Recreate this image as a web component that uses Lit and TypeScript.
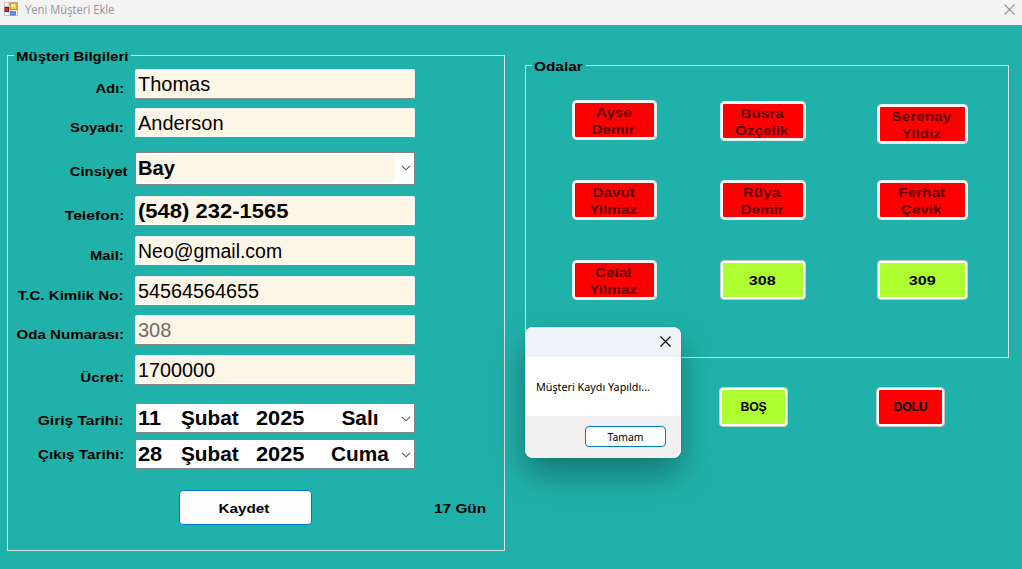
import { LitElement, html, css, svg } from "lit";
import { customElement, property } from "lit/decorators.js";
import { classMap } from "lit/directives/class-map.js";
import { styleMap } from "lit/directives/style-map.js";

type Kind = "text" | "combo" | "date";
interface Field {
  label: string;
  kind: Kind;
  gap: number;
  drop: number;
  labelStretch?: number;
  value?: string;
  bold?: boolean;
  disabled?: boolean;
  stretch?: number;
  date?: [string, string, string, string];
}

const FIELDS: Field[] = [
  { label: "Adı:", kind: "text", gap: 0, drop: 24, value: "Thomas" },
  { label: "Soyadı:", kind: "text", gap: 9, drop: 24, value: "Anderson" },
  { label: "Cinsiyet", kind: "combo", gap: 14, drop: 24, value: "Bay", bold: true, stretch: 1.01 },
  { label: "Telefon:", kind: "text", gap: 11, drop: 24, labelStretch: 1.16, value: "(548) 232-1565", bold: true, stretch: 1.1 },
  { label: "Mail:", kind: "text", gap: 10, drop: 24, value: "Neo@gmail.com", stretch: 0.973 },
  { label: "T.C. Kimlik No:", kind: "text", gap: 10, drop: 24, labelStretch: 1.12, value: "54564564655", stretch: 0.99 },
  { label: "Oda Numarası:", kind: "text", gap: 9, drop: 24, labelStretch: 1.12, value: "308", disabled: true },
  { label: "Ücret:", kind: "text", gap: 10, drop: 27, labelStretch: 1.12, value: "1700000", stretch: 0.99 },
  { label: "Giriş Tarihi:", kind: "date", gap: 17, drop: 22, labelStretch: 1.15, date: ["11", "Şubat", "2025", "Salı"] },
  { label: "Çıkış Tarihi:", kind: "date", gap: 6, drop: 20, labelStretch: 1.13, date: ["28", "Şubat", "2025", "Cuma"] },
];

interface Room {
  lines: string[];
  taken: boolean;
  drop: number;
}
const ROOMS: Room[] = [
  { lines: ["Ayse", "Demir"], taken: true, drop: 0 },
  { lines: ["Büsra", "Özçelik"], taken: true, drop: 1 },
  { lines: ["Serenay", "Yildiz"], taken: true, drop: 4 },
  { lines: ["Davut", "Yilmaz"], taken: true, drop: 0 },
  { lines: ["Rüya", "Demir"], taken: true, drop: 0 },
  { lines: ["Ferhat", "Çevik"], taken: true, drop: 0 },
  { lines: ["Celal", "Yilmaz"], taken: true, drop: 0 },
  { lines: ["308"], taken: false, drop: 0 },
  { lines: ["309"], taken: false, drop: 0 },
];

const cross = (size: number) => html`<svg width=${size} height=${size} viewBox="0 0 11 11" fill="none" stroke="currentColor" stroke-width="1.1">
  ${svg`<path d="M.5 .5L10.5 10.5M10.5 .5L.5 10.5"/>`}
</svg>`;

const chevron = html`<svg class="chevron" width="10" height="6" viewBox="0 0 10 6" fill="none" stroke="#555" stroke-width="1.1">
  <path d="M1 .8L5 4.8L9 .8" />
</svg>`;

const shared = css`
  * { box-sizing: border-box; }
  .caption {
    display: block;
    font: bold 13.5px/17px "Liberation Sans", Arial, sans-serif;
    white-space: nowrap;
    transform: scaleX(1.1);
  }
`;

@customElement("form-row")
class FormRow extends LitElement {
  @property({ attribute: false }) field!: Field;

  static styles = [
    shared,
    css`
      :host { display: grid; grid-template-columns: 127px 280px; }
      .label { justify-self: end; margin-right: 11px; transform-origin: right; }
      .label.wide { margin-right: 7px; }
      .box {
        position: relative;
        display: flex;
        align-items: flex-start;
        height: 30px;
        padding: 2px 0 0 2px;
        background: #fdf5e6;
        border: 1px solid #ececec;
        border-bottom-color: #868686;
        border-radius: 2px;
        box-shadow: inset 0 0 0 1px #fff;
        font: 20px/24px "Liberation Sans", Arial, sans-serif;
        color: #000;
        white-space: nowrap;
      }
      .bold { font-weight: bold; }
      .disabled { color: #6d6d6d; }
      .value { transform-origin: left; display: block; }
      .combo {
        height: 33px;
        padding-top: 3px;
        border-color: #868686;
        border-radius: 1px;
        background: linear-gradient(to right, #fdf5e6 259px, #fff 259px);
        box-shadow: inset 0 0 0 2px #fff;
      }
      .date {
        display: grid;
        grid-template-columns: 43px 75px 64px 80px;
        padding-left: 2px;
        background: #fff;
        border-color: #868686;
        border-radius: 1px;
        font-weight: bold;
      }
      .num { transform: scaleX(1.09); }
      .month { transform: scaleX(1.04); }
      .weekday { text-align: center; transform: scaleX(1.04); transform-origin: center; }
      .chevron { position: absolute; right: 3px; top: 12px; }
    `,
  ];

  render() {
    const f = this.field;
    return html`
      <span
        class=${classMap({ caption: true, label: true, wide: f.kind === "combo" })}
        style=${styleMap({ marginTop: `${f.drop - 13}px`, transform: `scaleX(${f.labelStretch ?? 1.1})` })}
        >${f.label}</span>
      <div class=${classMap({ box: true, [f.kind]: true, bold: !!f.bold, disabled: !!f.disabled })}>
        ${f.date
          ? html`<span class="value num">${f.date[0]}</span><span class="value month">${f.date[1]}</span
              ><span class="value num">${f.date[2]}</span><span class="value weekday">${f.date[3]}</span>`
          : html`<span class="value" style=${styleMap({ transform: `scaleX(${f.stretch ?? 1})` })}>${f.value}</span>`}
        ${f.kind === "text" ? "" : chevron}
      </div>
    `;
  }
}

@customElement("app-root")
class AppRoot extends LitElement {
  static styles = [
    shared,
    css`
      :host {
        display: flex;
        flex-direction: column;
        position: relative;
        width: 1022px;
        height: 569px;
        overflow: hidden;
        background: #20b2aa;
        color: #000;
        font-family: "Liberation Sans", Arial, sans-serif;
      }
      .titlebar {
        display: flex;
        align-items: flex-start;
        height: 25px;
        flex: none;
        padding: 2px 7px 0 4px;
        background: #f3f3f3;
        color: #959595;
      }
      .title {
        flex: 1;
        margin-left: 7px;
        font: 12px/16px "Open Sans", "Noto Sans", sans-serif;
        transform: scaleX(0.935);
        transform-origin: left;
      }
      .titlebar .x { display: flex; margin-top: 2px; }
      .main { display: flex; align-items: flex-start; padding: 21px 0 0 7px; }
      fieldset { margin: 0; padding: 0; border: 1px solid #d9e2e1; min-width: 0; }
      legend { height: 18px; margin-left: 6px; padding: 2px 3px 0 2px; }
      legend .caption { transform: scaleX(1.11); transform-origin: left; }
      .customer { width: 498px; height: 505px; }
      .customer legend { width: 117px; }
      .fields { padding-top: 5px; }
      .actions { display: flex; align-items: center; margin-top: 21px; padding-left: 171px; }
      .save {
        width: 133px;
        height: 35px;
        padding: 1px 3px 0 0;
        background: #fdfdfd;
        border: 1px solid #0078d4;
        border-radius: 4px;
        color: #000;
      }
      .save .caption { transform: scaleX(1.13); }
      .days { margin-left: 122px; padding-top: 1px; transform: scaleX(1.14); transform-origin: left; }
      .right { margin: 10px 0 0 20px; }
      .rooms { width: 484px; height: 302px; }
      .rooms legend { width: 54px; }
      .rooms legend .caption { transform: scaleX(1.14); }
      .grid {
        display: grid;
        grid-template-columns: 85px 86px 91px;
        grid-auto-rows: 40px;
        column-gap: 63px;
        row-gap: 40px;
        padding: 26px 0 0 46px;
      }
      .grid .room:nth-child(3n) { margin-left: 8px; margin-right: -8px; }
      .room {
        display: flex;
        flex-direction: column;
        align-items: center;
        justify-content: center;
        height: 40px;
        padding: 0;
        background: #adff2f;
        border: 1px solid #c5cccb;
        border-radius: 4px;
        box-shadow: inset 0 0 0 2px #fff;
        color: #000;
      }
      .room.taken { background: #f00; }
      .grid .taken { padding: 2px 2px 0 0; border-color: #e3efee; box-shadow: inset 0 0 0 2px #f7f7f7; color: #600000; }
      .grid .taken .caption { transform: scaleX(1.13); }
      .grid .free { padding-right: 1px; }
      .grid .free .caption { transform: scaleX(1.2); }
      .legend-row { display: flex; gap: 88px; padding: 29px 0 0 194px; }
      .legend-row .room { width: 69px; font: bold 12.3px/16px "Liberation Sans", Arial, sans-serif; letter-spacing: -0.2px; }

      .dialog {
        position: absolute;
        left: 525px;
        top: 327px;
        width: 156px;
        height: 131px;
        display: flex;
        flex-direction: column;
        border-radius: 8px;
        overflow: hidden;
        background: #fff;
        box-shadow: 0 0 1px rgba(0, 0, 0, 0.5), 0 16px 34px rgba(0, 0, 0, 0.34);
        font: 11px/16px "Noto Sans", "Open Sans", sans-serif;
      }
      .dialog header { display: flex; justify-content: flex-end; height: 30px; padding: 9px 10px 0 0; background: #eef3f8; }
      .message { flex: 1; margin: 0; padding: 22px 0 0 11px; white-space: nowrap; }
      .message span { display: inline-block; transform: scaleX(0.98); transform-origin: left; }
      .dialog footer { display: flex; justify-content: flex-end; height: 42px; padding: 10px 15px 0 0; background: #f0f0f0; }
      .ok {
        width: 81px;
        height: 21px;
        padding: 0;
        background: #fdfdfd;
        border: 1px solid #0078d4;
        border-radius: 4px;
        font: inherit;
        color: #000;
      }
      .ok span { display: block; transform: scaleX(0.94); }
    `,
  ];

  render() {
    return html`
      <header class="titlebar">
        <svg width="14" height="14" viewBox="0 0 14 14">
          <path fill="#fff" stroke="#b8b8b8" stroke-width=".8" d="M.5 .5h13v13h-13zM.5 4.5h4.5v-4M5 4v9.500M.5 10h4.500M11.500 9h2v4.500" />
          <rect x="1" y="5.500" width="3.500" height="4" fill="#c43a30" stroke="#8f1a14" />
          <rect x="6" y="1" width="7" height="6.500" fill="#f9cf47" stroke="#c58a10" />
          <rect x="7" y="2" width="4" height="3" fill="#ffe793" />
          <rect x="6.500" y="9.500" width="5" height="3.500" fill="#5b95ec" stroke="#3c6fd0" stroke-width=".8" />
        </svg>
        <span class="title">Yeni Müşteri Ekle</span>
        <span class="x">${cross(11)}</span>
      </header>

      <div class="main">
        <fieldset class="customer">
          <legend><span class="caption">Müşteri Bilgileri</span></legend>
          <div class="fields">
            ${FIELDS.map((f) => html`<form-row .field=${f} style=${styleMap({ marginTop: `${f.gap}px` })}></form-row>`)}
          </div>
          <div class="actions">
            <button class="save"><span class="caption">Kaydet</span></button>
            <span class="caption days">17 Gün</span>
          </div>
        </fieldset>

        <div class="right">
          <fieldset class="rooms">
            <legend><span class="caption">Odalar</span></legend>
            <div class="grid">
              ${ROOMS.map(
                (r) => html`<button
                  class=${classMap({ room: true, taken: r.taken, free: !r.taken })}
                  style=${styleMap({ marginTop: `${r.drop}px` })}
                >
                  ${r.lines.map((l) => html`<span class="caption">${l}</span>`)}
                </button>`,
              )}
            </div>
          </fieldset>
          <div class="legend-row">
            <button class="room free">BOŞ</button>
            <button class="room taken">DOLU</button>
          </div>
        </div>
      </div>

      <section class="dialog">
        <header>${cross(11)}</header>
        <p class="message"><span>Müşteri Kaydı Yapıldı...</span></p>
        <footer><button class="ok"><span>Tamam</span></button></footer>
      </section>
    `;
  }
}
